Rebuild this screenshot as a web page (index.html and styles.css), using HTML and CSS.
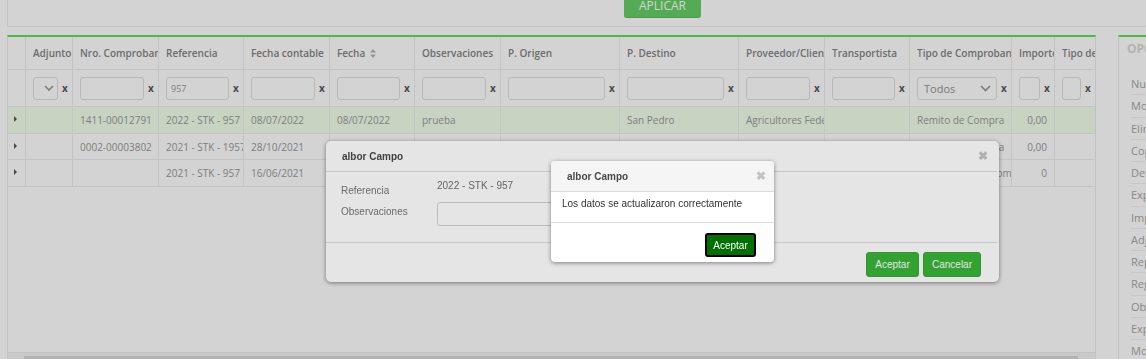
FILE: index.html
```html
<!DOCTYPE html>
<html lang="es">
<head>
    <meta charset="UTF-8">
    <meta name="viewport" content="width=device-width, initial-scale=1.0">
    <title>albor Campo - Comprobantes de stock</title>
    <link rel="stylesheet" href="styles.css">
</head>
<body>
    <div class="toolbar">
        <button class="btn-apply">APLICAR</button>
    </div>

    <div class="main">
        <div class="grid">
            <table class="grid-table">
                <colgroup>
                    <col style="width:18px"><col style="width:47px"><col style="width:86px">
                    <col style="width:85px"><col style="width:86px"><col style="width:85px">
                    <col style="width:86px"><col style="width:119px"><col style="width:119px">
                    <col style="width:86px"><col style="width:85px"><col style="width:102px">
                    <col style="width:43px"><col style="width:40px">
                </colgroup>
                <thead>
                    <tr class="head-row">
                        <th></th>
                        <th>Adjunto</th>
                        <th>Nro. Comprobante</th>
                        <th>Referencia</th>
                        <th>Fecha contable</th>
                        <th>Fecha <svg class="sort-icon" width="6" height="9" viewBox="0 0 6 9"><path d="M3 0L6 3.5H0Z M3 9L0 5.5H6Z" fill="#b5b5b5"/></svg></th>
                        <th>Observaciones</th>
                        <th>P. Origen</th>
                        <th>P. Destino</th>
                        <th>Proveedor/Cliente</th>
                        <th>Transportista</th>
                        <th>Tipo de Comprobante</th>
                        <th>Importe</th>
                        <th>Tipo de Movimiento</th>
                    </tr>
                    <tr class="filter-row">
                        <td></td>
                        <td><div class="filter"><div class="select select-small"><svg width="10" height="6" viewBox="0 0 10 6"><path d="M1 1L5 5L9 1" fill="none" stroke="#999" stroke-width="1.6"/></svg></div><span class="clear">x</span></div></td>
                        <td><div class="filter"><input type="text"><span class="clear">x</span></div></td>
                        <td><div class="filter"><input type="text" value="957"><span class="clear">x</span></div></td>
                        <td><div class="filter"><input type="text"><span class="clear">x</span></div></td>
                        <td><div class="filter"><input type="text"><span class="clear">x</span></div></td>
                        <td><div class="filter"><input type="text"><span class="clear">x</span></div></td>
                        <td><div class="filter"><input type="text"><span class="clear">x</span></div></td>
                        <td><div class="filter"><input type="text"><span class="clear">x</span></div></td>
                        <td><div class="filter"><input type="text"><span class="clear">x</span></div></td>
                        <td><div class="filter"><input type="text"><span class="clear">x</span></div></td>
                        <td><div class="filter"><div class="select"><span>Todos</span><svg width="11" height="7" viewBox="0 0 11 7"><path d="M1 1L5.5 5.5L10 1" fill="none" stroke="#999" stroke-width="1.7"/></svg></div><span class="clear">x</span></div></td>
                        <td><div class="filter"><input type="text"><span class="clear">x</span></div></td>
                        <td><div class="filter"><input type="text"><span class="clear">x</span></div></td>
                    </tr>
                </thead>
                <tbody>
                    <tr class="row-selected">
                        <td><span class="expander"></span></td>
                        <td></td>
                        <td>1411-00012791</td>
                        <td>2022 - STK - 957</td>
                        <td>08/07/2022</td>
                        <td>08/07/2022</td>
                        <td>prueba</td>
                        <td></td>
                        <td>San Pedro</td>
                        <td>Agricultores Federados</td>
                        <td></td>
                        <td>Remito de Compra</td>
                        <td class="num">0,00</td>
                        <td></td>
                    </tr>
                    <tr>
                        <td><span class="expander"></span></td>
                        <td></td>
                        <td>0002-00003802</td>
                        <td>2021 - STK - 1957</td>
                        <td>28/10/2021</td>
                        <td>28/10/2021</td>
                        <td></td>
                        <td></td>
                        <td>San Pedro</td>
                        <td>Agricultores Federados</td>
                        <td></td>
                        <td>Remito de Compra</td>
                        <td class="num">0,00</td>
                        <td></td>
                    </tr>
                    <tr>
                        <td><span class="expander"></span></td>
                        <td></td>
                        <td></td>
                        <td>2021 - STK - 957</td>
                        <td>16/06/2021</td>
                        <td>16/06/2021</td>
                        <td></td>
                        <td></td>
                        <td></td>
                        <td></td>
                        <td></td>
                        <td>Devoluciones a Compra</td>
                        <td class="num">0</td>
                        <td></td>
                    </tr>
                </tbody>
            </table>
            <div class="grid-fill"></div>
            <div class="hscroll">
                <span class="hscroll-arrow"></span>
                <div class="hscroll-thumb"></div>
            </div>
        </div>

        <aside class="options">
            <div class="options-title">OPCIONES</div>
            <ul class="options-list">
                <li>Nuevo</li>
                <li>Modificar</li>
                <li>Eliminar</li>
                <li>Copiar</li>
                <li>Detalle</li>
                <li>Exportar</li>
                <li>Imprimir</li>
                <li>Adjuntos</li>
                <li>Reporte</li>
                <li>Registrar</li>
                <li>Obtener</li>
                <li>Exportar Excel</li>
                <li>Modificar Fecha</li>
            </ul>
        </aside>
    </div>

    <div class="overlay overlay-first"></div>

    <div class="modal modal-edit">
        <div class="modal-header">
            <span class="modal-title">albor Campo</span>
            <span class="modal-close">&#10006;</span>
        </div>
        <div class="modal-body">
            <div class="field field-ref">
                <span class="field-label">Referencia</span>
                <span class="field-value">2022 - STK - 957</span>
            </div>
            <div class="field field-obs">
                <span class="field-label">Observaciones</span>
                <input type="text" class="field-input" value="">
            </div>
        </div>
        <div class="modal-footer">
            <button class="btn-green btn-accept">Aceptar</button>
            <button class="btn-green btn-cancel">Cancelar</button>
        </div>
    </div>

    <div class="overlay overlay-second"></div>

    <div class="modal modal-alert">
        <div class="alert-header">
            <span class="modal-title">albor Campo</span>
            <span class="modal-close">&#10006;</span>
        </div>
        <div class="alert-body">Los datos se actualizaron correctamente</div>
        <div class="alert-footer">
            <button class="btn-dark">Aceptar</button>
        </div>
    </div>
</body>
</html>
```

FILE: styles.css
```css
html {
    overflow: hidden;
}
body {
    font-family: 'Open Sans', sans-serif;
    background-color: #fff;
    color: #9a9a9a;
    margin: 0;
    padding: 0;
    height: 366px;
}
.toolbar {
    margin-left: 7px;
    height: 26px;
    border-left: 1px solid #ececec;
    border-bottom: 1px solid #ececec;
    display: flex;
    align-items: flex-end;
    padding-left: 616px;
}
.btn-apply {
    font-family: 'Open Sans', sans-serif;
    font-size: 12px;
    color: #fff;
    background-color: #68d068;
    border: none;
    border-bottom: 1px solid #5cbc5c;
    border-radius: 0 0 3px 3px;
    width: 77px;
    height: 18px;
    line-height: 10px;
    padding: 0 0 6px;
    margin-bottom: 8px;
}
.main {
    display: flex;
    margin-top: 8px;
    margin-left: 7px;
    height: 331px;
}
.grid {
    width: 1087px;
    border-left: 1px solid #ececec;
    border-right: 1px solid #ececec;
    border-top: 2px solid #5ce25c;
    display: flex;
    flex-direction: column;
}
.grid-table {
    width: 1087px;
    table-layout: fixed;
    border-collapse: separate;
    border-spacing: 0;
}
.grid-table th,
.grid-table td {
    box-sizing: border-box;
    border-right: 1px solid #eeeeee;
    border-bottom: 1px solid #eeeeee;
    padding: 0 7px;
    white-space: nowrap;
    overflow: hidden;
    text-align: left;
    font-size: 10px;
}
.grid-table th:last-child,
.grid-table td:last-child {
    border-right: none;
}
.head-row th {
    height: 33px;
    font-weight: 600;
    color: #858585;
}
.sort-icon {
    margin-left: 2px;
    vertical-align: -1px;
}
.filter-row td {
    height: 37px;
}
.filter {
    display: flex;
    align-items: center;
}
.filter input,
.select {
    flex: 1;
    min-width: 0;
    height: 23px;
    box-sizing: border-box;
    border: 1px solid #dfdfdf;
    border-radius: 3px;
    background-color: #fff;
    font-family: 'Open Sans', sans-serif;
    font-size: 9px;
    color: #9a9a9a;
    padding: 0 4px;
    margin: 0;
    outline: none;
}
.select {
    display: flex;
    align-items: center;
    justify-content: space-between;
    padding: 0 5px 0 6px;
    font-size: 11px;
    color: #939393;
}
.select-small {
    justify-content: center;
    padding: 0 0 0 6px;
}
.clear {
    width: 14px;
    flex: none;
    text-align: center;
    font-size: 10px;
    font-weight: 700;
    color: #595959;
    margin-right: -7px;
}
.grid-table tbody td {
    height: 26.7px;
    color: #9a9a9a;
}
.grid-table tbody td.num {
    text-align: right;
}
.row-selected td {
    background-color: #f2ffec;
}
.grid-table tbody td:first-child {
    padding: 0 0 0 6px;
    vertical-align: top;
    padding-top: 9px;
}
.expander {
    display: block;
    width: 0;
    height: 0;
    border-left: 3px solid #5a5a5a;
    border-top: 3px solid transparent;
    border-bottom: 3px solid transparent;
}
.grid-fill {
    flex: 1;
}
.hscroll {
    height: 13px;
    background-color: #f4f4f4;
    border-top: 1px solid #ececec;
    display: flex;
    align-items: flex-end;
    padding-left: 4px;
}
.hscroll-arrow {
    width: 0;
    height: 0;
    border-bottom: 3px solid #888;
    border-left: 3px solid transparent;
    border-right: 3px solid transparent;
    margin: 0 6px 2px 0;
}
.hscroll-thumb {
    width: 1054px;
    height: 10px;
    background-color: #d8d8d8;
}
.options {
    flex: 1;
    margin-left: 22px;
    border-left: 1px solid #ececec;
    border-top: 2px solid #5ce25c;
    padding-left: 8px;
    overflow: hidden;
}
.options-title {
    font-size: 12px;
    font-weight: 700;
    color: #d9d9d9;
    height: 36px;
    line-height: 24px;
    white-space: nowrap;
}
.options-list {
    list-style: none;
    margin: 0 0 0 4px;
    padding: 0;
}
.options-list li {
    height: 21.25px;
    line-height: 21.25px;
    border-bottom: 1px solid #f1f1f1;
    font-size: 11px;
    color: #a6a6a6;
    white-space: nowrap;
}
.overlay {
    position: fixed;
    top: 0;
    left: 0;
    right: 0;
    bottom: 0;
}
.overlay-first {
    background-color: rgba(0, 0, 0, 0.08);
}
.overlay-second {
    background-color: rgba(0, 0, 0, 0.1);
}
.modal {
    position: fixed;
    background-color: #fff;
    font-family: 'Liberation Sans', Arial, sans-serif;
    font-size: 10px;
    box-sizing: border-box;
}
.modal-edit {
    left: 326px;
    top: 141px;
    width: 673px;
    height: 141px;
    border-radius: 5px;
    box-shadow: 0 1px 4px rgba(0, 0, 0, 0.45);
}
.modal-header {
    height: 31px;
    box-sizing: border-box;
    border-bottom: 1px solid #dedede;
    margin-right: 2px;
    padding: 0 9px 0 16px;
    display: flex;
    align-items: center;
    justify-content: space-between;
}
.modal-title {
    font-weight: 700;
    color: #4a4a4a;
}
.modal-close {
    font-size: 12px;
    font-weight: 700;
    color: #c4c4c4;
}
.modal-body {
    padding: 8px 15px 16px;
    border-bottom: 1px solid #dedede;
    margin-right: 2px;
}
.field {
    display: flex;
    align-items: flex-start;
}
.field-label {
    width: 96px;
    color: #777;
}
.field-ref {
    height: 17px;
    margin-bottom: 5px;
}
.field-ref .field-label {
    margin-top: 5px;
    line-height: 12px;
}
.field-value {
    line-height: 12px;
    color: #707070;
}
.field-obs .field-label {
    line-height: 20px;
}
.field-input {
    width: 300px;
    height: 24px;
    box-sizing: border-box;
    border: 1px solid #d1d1d1;
    border-radius: 3px;
    margin: 0;
}
.modal-footer {
    display: flex;
    justify-content: flex-end;
    gap: 4px;
    padding: 9px 18px 0 0;
}
.btn-green {
    font-family: 'Liberation Sans', Arial, sans-serif;
    font-size: 10px;
    color: #fff;
    background-color: #39b539;
    border: 1px solid #35a935;
    border-radius: 3px;
    height: 25px;
    padding: 0;
}
.btn-accept {
    width: 53px;
}
.btn-cancel {
    width: 58px;
}
.modal-alert {
    left: 551px;
    top: 161px;
    width: 223px;
    height: 101px;
    border-radius: 4px;
    overflow: hidden;
    box-shadow: 0 1px 4px rgba(0, 0, 0, 0.45);
}
.alert-header {
    height: 31px;
    box-sizing: border-box;
    background-color: #f5f5f5;
    border-bottom: 1px solid #dcdcdc;
    padding: 0 8px 0 16px;
    display: flex;
    align-items: center;
    justify-content: space-between;
}
.alert-body {
    padding: 6px 11px 12px;
    line-height: 12px;
    color: #333;
    border-bottom: 1px solid #dcdcdc;
    white-space: nowrap;
}
.alert-footer {
    display: flex;
    justify-content: flex-end;
    padding: 10px 18px 0 0;
}
.btn-dark {
    font-family: 'Liberation Sans', Arial, sans-serif;
    font-size: 10px;
    color: #fff;
    background-color: #007000;
    border: 2px solid #000;
    border-radius: 3px;
    width: 51px;
    height: 24px;
    padding: 0;
}
```
